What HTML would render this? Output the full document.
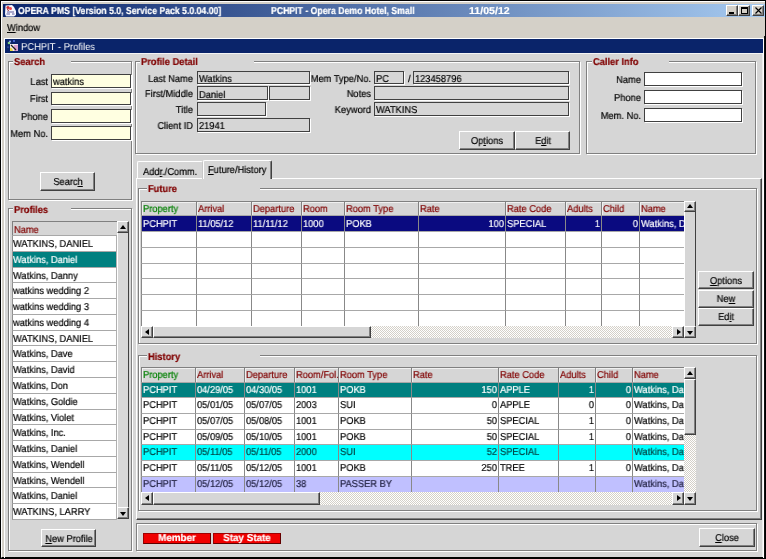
<!DOCTYPE html><html><head><meta charset="utf-8"><style>
html,body{margin:0;padding:0;}
body{width:766px;height:559px;position:relative;overflow:hidden;background:#d4d0c8;font-family:"Liberation Sans",sans-serif;font-size:10px;color:#000;text-rendering:geometricPrecision;}
div{position:absolute;box-sizing:border-box;}
.t{white-space:nowrap;will-change:transform;-webkit-text-stroke:0.2px currentColor;}
.btn{background:#d6d6d6;border-top:1px solid #fff;border-left:1px solid #fff;border-right:1px solid #404040;border-bottom:1px solid #404040;box-shadow:inset -1px -1px 0 #808080;}
u{text-decoration:underline;}
</style></head><body>
<div style="left:0px;top:0px;width:766px;height:559px;border:1px solid #000"></div>
<div style="left:1px;top:1px;width:764px;height:557px;border-top:1px solid #fff;border-left:1px solid #fff;border-bottom:1px solid #000"></div>
<div style="left:3px;top:4px;width:762px;height:13px;background:linear-gradient(to right,#0a246a,#a6caf0)"></div>
<div class="t" style="left:18px;top:7px;font-weight:bold;font-size:10px;line-height:10px;color:#fff;transform:scaleX(0.87);transform-origin:0 0;">OPERA PMS [Version 5.0, Service Pack 5.0.04.00]</div>
<div class="t" style="left:271px;top:7px;font-weight:bold;font-size:10px;line-height:10px;color:#fff;transform:scaleX(0.87);transform-origin:0 0;">PCHPIT - Opera Demo Hotel, Small</div>
<div class="t" style="left:469px;top:7px;font-weight:bold;font-size:10px;line-height:10px;color:#fff;transform:scaleX(1.06);transform-origin:0 0;">11/05/12</div>
<svg style="position:absolute;left:4px;top:4px" width="13" height="13" viewBox="0 0 13 13"><path d="M1.5 1.5 L8 1 L10 3 L12 7 L12 11 L10 12.5 L2 12.5 L1 10 Z" fill="#f6f6ff"/><circle cx="4" cy="3.5" r="1.6" fill="#d03030"/><circle cx="6.5" cy="4.5" r="1.5" fill="#f04848"/><path d="M3 5.5 L5 6.5" stroke="#902020" stroke-width="1"/><path d="M3 8 L10 8 M2.5 10 L6 10 M8 10 L10.5 10" stroke="#5a5a9a" stroke-width="1"/></svg>
<div class="btn" style="left:726px;top:5px;width:12px;height:11px;background:#d4d0c8"></div>
<div class="btn" style="left:738px;top:5px;width:12px;height:11px;background:#d4d0c8"></div>
<div class="btn" style="left:752px;top:5px;width:12px;height:11px;background:#d4d0c8"></div>
<div style="left:729px;top:12px;width:5px;height:2px;background:#000"></div>
<div style="left:741px;top:7px;width:7px;height:7px;border:1px solid #000;border-top-width:2px"></div>
<svg style="position:absolute;left:755px;top:7px" width="7" height="7" viewBox="0 0 7 7"><path d="M0.5 0.5L6.5 6.5M6.5 0.5L0.5 6.5" stroke="#000" stroke-width="1.15"/></svg>
<div class="t" style="left:7px;top:24px;font-weight:normal;font-size:10px;line-height:10px;color:#000;transform:scaleX(0.93);transform-origin:0 0;"><u>W</u>indow</div>
<div style="left:4px;top:38px;width:760px;height:520px;border-top:1px solid #fff;border-left:1px solid #fff;border-right:1px solid #fff"></div>
<div style="left:764px;top:36px;width:1px;height:522px;background:#101010"></div>
<div style="left:5px;top:53px;width:758px;height:504px;background:#d6d6d6"></div>
<div style="left:762px;top:53px;width:1px;height:504px;background:#ececec"></div>
<div style="left:5px;top:53px;width:758px;height:1px;background:#f4f4f4"></div>
<div style="left:5px;top:39px;width:758px;height:14px;background:#0a246a"></div>
<svg style="position:absolute;left:5px;top:39px" width="14" height="14" viewBox="0 0 14 14"><rect x="5" y="5" width="8" height="7" fill="#f0e8f0"/><path d="M5 9 Q7 8 8 12 L5 12Z" fill="#e8d840"/><path d="M9 6 L13 6 L13 12 L9 12Z" fill="#d8a0d0"/><path d="M6 6 L11 11" stroke="#202020" stroke-width="1.2"/><circle cx="4" cy="4" r="1.3" fill="#80d080"/><circle cx="5" cy="2.5" r="1" fill="#a0b8ff"/><circle cx="9" cy="2" r="0.9" fill="#6080ff"/><circle cx="3" cy="8" r="0.6" fill="#8090ff"/></svg>
<div class="t" style="left:20.5px;top:43px;font-weight:normal;font-size:10px;line-height:10px;color:#fff;transform:scaleX(0.94);transform-origin:0 0;-webkit-text-stroke:0;">PCHPIT - Profiles</div>
<div style="left:9px;top:62px;width:124px;height:139px;border:1px solid #fff"></div>
<div style="left:8px;top:61px;width:124px;height:139px;border:1px solid #808080"></div>
<div style="left:13px;top:60px;width:58px;height:4px;background:#d6d6d6"></div>
<div class="t" style="left:14px;top:58px;font-weight:bold;font-size:10px;line-height:10px;color:#800000;transform:scaleX(0.93);transform-origin:0 0;">Search</div>
<div class="t" style="left:-352px;width:400px;text-align:right;top:78px;font-weight:normal;font-size:10px;line-height:10px;color:#000;transform:scaleX(0.93);transform-origin:100% 0;">Last</div>
<div style="left:51px;top:74px;width:80px;height:14px;background:#ffffe1;border:1px solid #404040;box-shadow:1px 1px 0 #fff"></div>
<div class="t" style="left:53px;top:78px;font-weight:normal;font-size:10px;line-height:10px;color:#000;transform:scaleX(0.93);transform-origin:0 0;">watkins</div>
<div class="t" style="left:-352px;width:400px;text-align:right;top:95px;font-weight:normal;font-size:10px;line-height:10px;color:#000;transform:scaleX(0.93);transform-origin:100% 0;">First</div>
<div style="left:51px;top:92px;width:80px;height:13px;background:#ffffe1;border:1px solid #404040;box-shadow:1px 1px 0 #fff"></div>
<div class="t" style="left:-352px;width:400px;text-align:right;top:113px;font-weight:normal;font-size:10px;line-height:10px;color:#000;transform:scaleX(0.93);transform-origin:100% 0;">Phone</div>
<div style="left:51px;top:109px;width:80px;height:14px;background:#ffffe1;border:1px solid #404040;box-shadow:1px 1px 0 #fff"></div>
<div class="t" style="left:-352px;width:400px;text-align:right;top:130px;font-weight:normal;font-size:10px;line-height:10px;color:#000;transform:scaleX(0.93);transform-origin:100% 0;">Mem No.</div>
<div style="left:51px;top:126px;width:80px;height:14px;background:#ffffe1;border:1px solid #404040;box-shadow:1px 1px 0 #fff"></div>
<div class="btn" style="left:40px;top:172px;width:55px;height:19px;"></div>
<div class="t" style="left:-132.5px;width:400px;text-align:center;top:178px;font-weight:normal;font-size:10px;line-height:10px;color:#000;transform:scaleX(0.93);transform-origin:50% 0;">Searc<u>h</u></div>
<div style="left:9px;top:209px;width:124px;height:343px;border:1px solid #fff"></div>
<div style="left:8px;top:208px;width:124px;height:343px;border:1px solid #808080"></div>
<div style="left:13px;top:207px;width:58px;height:4px;background:#d6d6d6"></div>
<div class="t" style="left:14px;top:206px;font-weight:bold;font-size:10px;line-height:10px;color:#800000;transform:scaleX(0.93);transform-origin:0 0;">Profiles</div>
<div style="left:12px;top:221px;width:105px;height:15px;background:#d6d6d6;border-top:1px solid #808080;border-left:1px solid #808080;border-bottom:1px solid #808080"></div>
<div class="t" style="left:14px;top:226px;font-weight:normal;font-size:10px;line-height:10px;color:#800000;transform:scaleX(0.93);transform-origin:0 0;">Name</div>
<div style="left:12px;top:235px;width:105px;height:17px;background:#fff;border:1px solid #a8a8a8;border-left-color:#909090;border-right-color:#b0b0b0"></div>
<div class="t" style="left:13px;top:240px;font-weight:normal;font-size:10px;line-height:10px;color:#000;transform:scaleX(0.93);transform-origin:0 0;">WATKINS, DANIEL</div>
<div style="left:12px;top:251px;width:105px;height:17px;background:#008080;border:1px solid #a8a8a8;border-left-color:#909090;border-right-color:#b0b0b0"></div>
<div class="t" style="left:13px;top:256px;font-weight:normal;font-size:10px;line-height:10px;color:#fff;transform:scaleX(0.93);transform-origin:0 0;">Watkins, Daniel</div>
<div style="left:12px;top:267px;width:105px;height:16px;background:#fff;border:1px solid #a8a8a8;border-left-color:#909090;border-right-color:#b0b0b0"></div>
<div class="t" style="left:13px;top:272px;font-weight:normal;font-size:10px;line-height:10px;color:#000;transform:scaleX(0.93);transform-origin:0 0;">Watkins, Danny</div>
<div style="left:12px;top:282px;width:105px;height:17px;background:#fff;border:1px solid #a8a8a8;border-left-color:#909090;border-right-color:#b0b0b0"></div>
<div class="t" style="left:13px;top:287px;font-weight:normal;font-size:10px;line-height:10px;color:#000;transform:scaleX(0.93);transform-origin:0 0;">watkins wedding 2</div>
<div style="left:12px;top:298px;width:105px;height:17px;background:#fff;border:1px solid #a8a8a8;border-left-color:#909090;border-right-color:#b0b0b0"></div>
<div class="t" style="left:13px;top:303px;font-weight:normal;font-size:10px;line-height:10px;color:#000;transform:scaleX(0.93);transform-origin:0 0;">watkins wedding 3</div>
<div style="left:12px;top:314px;width:105px;height:17px;background:#fff;border:1px solid #a8a8a8;border-left-color:#909090;border-right-color:#b0b0b0"></div>
<div class="t" style="left:13px;top:319px;font-weight:normal;font-size:10px;line-height:10px;color:#000;transform:scaleX(0.93);transform-origin:0 0;">watkins wedding 4</div>
<div style="left:12px;top:330px;width:105px;height:16px;background:#fff;border:1px solid #a8a8a8;border-left-color:#909090;border-right-color:#b0b0b0"></div>
<div class="t" style="left:13px;top:335px;font-weight:normal;font-size:10px;line-height:10px;color:#000;transform:scaleX(0.93);transform-origin:0 0;">WATKINS, DANIEL</div>
<div style="left:12px;top:345px;width:105px;height:17px;background:#fff;border:1px solid #a8a8a8;border-left-color:#909090;border-right-color:#b0b0b0"></div>
<div class="t" style="left:13px;top:350px;font-weight:normal;font-size:10px;line-height:10px;color:#000;transform:scaleX(0.93);transform-origin:0 0;">Watkins, Dave</div>
<div style="left:12px;top:361px;width:105px;height:17px;background:#fff;border:1px solid #a8a8a8;border-left-color:#909090;border-right-color:#b0b0b0"></div>
<div class="t" style="left:13px;top:366px;font-weight:normal;font-size:10px;line-height:10px;color:#000;transform:scaleX(0.93);transform-origin:0 0;">Watkins, David</div>
<div style="left:12px;top:377px;width:105px;height:17px;background:#fff;border:1px solid #a8a8a8;border-left-color:#909090;border-right-color:#b0b0b0"></div>
<div class="t" style="left:13px;top:382px;font-weight:normal;font-size:10px;line-height:10px;color:#000;transform:scaleX(0.93);transform-origin:0 0;">Watkins, Don</div>
<div style="left:12px;top:393px;width:105px;height:17px;background:#fff;border:1px solid #a8a8a8;border-left-color:#909090;border-right-color:#b0b0b0"></div>
<div class="t" style="left:13px;top:398px;font-weight:normal;font-size:10px;line-height:10px;color:#000;transform:scaleX(0.93);transform-origin:0 0;">Watkins, Goldie</div>
<div style="left:12px;top:409px;width:105px;height:16px;background:#fff;border:1px solid #a8a8a8;border-left-color:#909090;border-right-color:#b0b0b0"></div>
<div class="t" style="left:13px;top:414px;font-weight:normal;font-size:10px;line-height:10px;color:#000;transform:scaleX(0.93);transform-origin:0 0;">Watkins, Violet</div>
<div style="left:12px;top:424px;width:105px;height:17px;background:#fff;border:1px solid #a8a8a8;border-left-color:#909090;border-right-color:#b0b0b0"></div>
<div class="t" style="left:13px;top:429px;font-weight:normal;font-size:10px;line-height:10px;color:#000;transform:scaleX(0.93);transform-origin:0 0;">Watkins, Inc.</div>
<div style="left:12px;top:440px;width:105px;height:17px;background:#fff;border:1px solid #a8a8a8;border-left-color:#909090;border-right-color:#b0b0b0"></div>
<div class="t" style="left:13px;top:445px;font-weight:normal;font-size:10px;line-height:10px;color:#000;transform:scaleX(0.93);transform-origin:0 0;">Watkins, Daniel</div>
<div style="left:12px;top:456px;width:105px;height:17px;background:#fff;border:1px solid #a8a8a8;border-left-color:#909090;border-right-color:#b0b0b0"></div>
<div class="t" style="left:13px;top:461px;font-weight:normal;font-size:10px;line-height:10px;color:#000;transform:scaleX(0.93);transform-origin:0 0;">Watkins, Wendell</div>
<div style="left:12px;top:472px;width:105px;height:16px;background:#fff;border:1px solid #a8a8a8;border-left-color:#909090;border-right-color:#b0b0b0"></div>
<div class="t" style="left:13px;top:477px;font-weight:normal;font-size:10px;line-height:10px;color:#000;transform:scaleX(0.93);transform-origin:0 0;">Watkins, Wendell</div>
<div style="left:12px;top:487px;width:105px;height:17px;background:#fff;border:1px solid #a8a8a8;border-left-color:#909090;border-right-color:#b0b0b0"></div>
<div class="t" style="left:13px;top:492px;font-weight:normal;font-size:10px;line-height:10px;color:#000;transform:scaleX(0.93);transform-origin:0 0;">Watkins, Daniel</div>
<div style="left:12px;top:503px;width:105px;height:17px;background:#fff;border:1px solid #a8a8a8;border-left-color:#909090;border-right-color:#b0b0b0"></div>
<div class="t" style="left:13px;top:508px;font-weight:normal;font-size:10px;line-height:10px;color:#000;transform:scaleX(0.93);transform-origin:0 0;">WATKINS, LARRY</div>
<div style="left:117px;top:221px;width:12px;height:298px;background:#d8d8d8;border-left:1px solid #fff;border-right:1px solid #404040"></div>
<div class="btn" style="left:117px;top:221px;width:12px;height:12px"></div>
<div style="left:119.5px;top:225px;width:0px;height:0px;border-left:3px solid transparent;border-right:3px solid transparent;border-bottom:4px solid #000"></div>
<div class="btn" style="left:117px;top:507px;width:12px;height:12px"></div>
<div style="left:119.5px;top:512px;width:0px;height:0px;border-left:3px solid transparent;border-right:3px solid transparent;border-top:4px solid #000"></div>
<div class="btn" style="left:41px;top:529px;width:55px;height:18px;"></div>
<div class="t" style="left:-131.5px;width:400px;text-align:center;top:535px;font-weight:normal;font-size:10px;line-height:10px;color:#000;transform:scaleX(0.93);transform-origin:50% 0;"><u>N</u>ew Profile</div>
<div style="left:136px;top:62px;width:445px;height:93px;border:1px solid #fff"></div>
<div style="left:135px;top:61px;width:445px;height:93px;border:1px solid #808080"></div>
<div style="left:140px;top:60px;width:114px;height:4px;background:#d6d6d6"></div>
<div class="t" style="left:141px;top:58px;font-weight:bold;font-size:10px;line-height:10px;color:#800000;transform:scaleX(0.93);transform-origin:0 0;">Profile Detail</div>
<div class="t" style="left:-207px;width:400px;text-align:right;top:75px;font-weight:normal;font-size:10px;line-height:10px;color:#000;transform:scaleX(0.93);transform-origin:100% 0;">Last Name</div>
<div class="t" style="left:-207px;width:400px;text-align:right;top:90px;font-weight:normal;font-size:10px;line-height:10px;color:#000;transform:scaleX(0.93);transform-origin:100% 0;">First/Middle</div>
<div class="t" style="left:-207px;width:400px;text-align:right;top:106px;font-weight:normal;font-size:10px;line-height:10px;color:#000;transform:scaleX(0.93);transform-origin:100% 0;">Title</div>
<div class="t" style="left:-207px;width:400px;text-align:right;top:122px;font-weight:normal;font-size:10px;line-height:10px;color:#000;transform:scaleX(0.93);transform-origin:100% 0;">Client ID</div>
<div style="left:197px;top:71px;width:113px;height:13px;background:#d6d6d6;border:1px solid #404040;box-shadow:1px 1px 0 #fff"></div>
<div class="t" style="left:199px;top:75px;font-weight:normal;font-size:10px;line-height:10px;color:#000;transform:scaleX(0.93);transform-origin:0 0;">Watkins</div>
<div style="left:197px;top:86px;width:71px;height:14px;background:#d6d6d6;border:1px solid #404040;box-shadow:1px 1px 0 #fff"></div>
<div class="t" style="left:199px;top:91px;font-weight:normal;font-size:10px;line-height:10px;color:#000;transform:scaleX(0.93);transform-origin:0 0;">Daniel</div>
<div style="left:269px;top:86px;width:41px;height:14px;background:#d6d6d6;border:1px solid #404040;box-shadow:1px 1px 0 #fff"></div>
<div style="left:197px;top:102px;width:69px;height:14px;background:#d6d6d6;border:1px solid #404040;box-shadow:1px 1px 0 #fff"></div>
<div style="left:197px;top:118px;width:113px;height:14px;background:#d6d6d6;border:1px solid #404040;box-shadow:1px 1px 0 #fff"></div>
<div class="t" style="left:199px;top:122px;font-weight:normal;font-size:10px;line-height:10px;color:#000;transform:scaleX(0.93);transform-origin:0 0;">21941</div>
<div class="t" style="left:-29px;width:400px;text-align:right;top:75px;font-weight:normal;font-size:10px;line-height:10px;color:#000;transform:scaleX(0.93);transform-origin:100% 0;">Mem Type/No.</div>
<div class="t" style="left:-29px;width:400px;text-align:right;top:90px;font-weight:normal;font-size:10px;line-height:10px;color:#000;transform:scaleX(0.93);transform-origin:100% 0;">Notes</div>
<div class="t" style="left:-29px;width:400px;text-align:right;top:106px;font-weight:normal;font-size:10px;line-height:10px;color:#000;transform:scaleX(0.93);transform-origin:100% 0;">Keyword</div>
<div style="left:374px;top:71px;width:30px;height:13px;background:#d6d6d6;border:1px solid #404040;box-shadow:1px 1px 0 #fff"></div>
<div class="t" style="left:376px;top:75px;font-weight:normal;font-size:10px;line-height:10px;color:#000;transform:scaleX(0.93);transform-origin:0 0;">PC</div>
<div class="t" style="left:408px;top:75px;font-weight:normal;font-size:10px;line-height:10px;color:#000;transform:scaleX(0.93);transform-origin:0 0;">/</div>
<div style="left:413px;top:71px;width:156px;height:13px;background:#d6d6d6;border:1px solid #404040;box-shadow:1px 1px 0 #fff"></div>
<div class="t" style="left:415px;top:75px;font-weight:normal;font-size:10px;line-height:10px;color:#000;transform:scaleX(0.93);transform-origin:0 0;">123458796</div>
<div style="left:374px;top:86px;width:195px;height:14px;background:#d6d6d6;border:1px solid #404040;box-shadow:1px 1px 0 #fff"></div>
<div style="left:374px;top:102px;width:195px;height:14px;background:#d6d6d6;border:1px solid #404040;box-shadow:1px 1px 0 #fff"></div>
<div class="t" style="left:376px;top:106px;font-weight:normal;font-size:10px;line-height:10px;color:#000;transform:scaleX(0.93);transform-origin:0 0;">WATKINS</div>
<div class="btn" style="left:459px;top:131px;width:56px;height:19px;"></div>
<div class="t" style="left:287.0px;width:400px;text-align:center;top:137px;font-weight:normal;font-size:10px;line-height:10px;color:#000;transform:scaleX(0.93);transform-origin:50% 0;">Op<u>t</u>ions</div>
<div class="btn" style="left:515px;top:131px;width:55px;height:19px;"></div>
<div class="t" style="left:342.5px;width:400px;text-align:center;top:137px;font-weight:normal;font-size:10px;line-height:10px;color:#000;transform:scaleX(0.93);transform-origin:50% 0;">E<u>d</u>it</div>
<div style="left:587px;top:62px;width:170px;height:93px;border:1px solid #fff"></div>
<div style="left:586px;top:61px;width:170px;height:93px;border:1px solid #808080"></div>
<div style="left:592px;top:60px;width:77px;height:4px;background:#d6d6d6"></div>
<div class="t" style="left:593px;top:58px;font-weight:bold;font-size:10px;line-height:10px;color:#800000;transform:scaleX(0.93);transform-origin:0 0;">Caller Info</div>
<div class="t" style="left:241px;width:400px;text-align:right;top:76px;font-weight:normal;font-size:10px;line-height:10px;color:#000;transform:scaleX(0.93);transform-origin:100% 0;">Name</div>
<div style="left:644px;top:72px;width:98px;height:14px;background:#fff;border:1px solid #404040;box-shadow:1px 1px 0 #fff"></div>
<div class="t" style="left:241px;width:400px;text-align:right;top:94px;font-weight:normal;font-size:10px;line-height:10px;color:#000;transform:scaleX(0.93);transform-origin:100% 0;">Phone</div>
<div style="left:644px;top:90px;width:98px;height:14px;background:#fff;border:1px solid #404040;box-shadow:1px 1px 0 #fff"></div>
<div class="t" style="left:241px;width:400px;text-align:right;top:112px;font-weight:normal;font-size:10px;line-height:10px;color:#000;transform:scaleX(0.93);transform-origin:100% 0;">Mem. No.</div>
<div style="left:644px;top:108px;width:98px;height:14px;background:#fff;border:1px solid #404040;box-shadow:1px 1px 0 #fff"></div>
<div style="left:136px;top:178px;width:626px;height:342px;border-top:1px solid #fff;border-left:1px solid #fff;border-right:1px solid #404040;border-bottom:1px solid #404040;box-shadow:inset -1px -1px 0 #808080"></div>
<div style="left:137px;top:161px;width:66px;height:18px;border-top:1px solid #fff;border-left:1px solid #fff;border-right:1px solid #c8c8c8;border-radius:2px 2px 0 0"></div>
<div class="t" style="left:143px;top:168px;font-weight:normal;font-size:10px;line-height:10px;color:#000;transform:scaleX(0.93);transform-origin:0 0;">Add<u>r</u>./Comm.</div>
<div style="left:203px;top:160px;width:69px;height:19px;background:#d6d6d6;border-top:1px solid #fff;border-left:1px solid #fff;border-right:1px solid #404040;box-shadow:inset -1px 0 0 #808080;border-radius:2px 2px 0 0"></div>
<div class="t" style="left:208px;top:166px;font-weight:normal;font-size:10px;line-height:10px;color:#000;transform:scaleX(0.93);transform-origin:0 0;"><u>F</u>uture/History</div>
<div style="left:139px;top:189px;width:619px;height:156px;border:1px solid #fff"></div>
<div style="left:138px;top:188px;width:619px;height:156px;border:1px solid #808080"></div>
<div style="left:147px;top:187px;width:113px;height:4px;background:#d6d6d6"></div>
<div class="t" style="left:148px;top:185px;font-weight:bold;font-size:10px;line-height:10px;color:#800000;transform:scaleX(0.93);transform-origin:0 0;">Future</div>
<div style="left:141px;top:201px;width:56px;height:15px;background:#d6d6d6;border:1px solid #808080;box-shadow:inset 1px 1px 0 #f0f0f0"></div>
<div class="t" style="left:143px;top:205px;font-weight:normal;font-size:10px;line-height:10px;color:#008000;transform:scaleX(0.93);transform-origin:0 0;">Property</div>
<div style="left:196px;top:201px;width:56px;height:15px;background:#d6d6d6;border:1px solid #808080;box-shadow:inset 1px 1px 0 #f0f0f0"></div>
<div class="t" style="left:198px;top:205px;font-weight:normal;font-size:10px;line-height:10px;color:#800000;transform:scaleX(0.93);transform-origin:0 0;">Arrival</div>
<div style="left:251px;top:201px;width:51px;height:15px;background:#d6d6d6;border:1px solid #808080;box-shadow:inset 1px 1px 0 #f0f0f0"></div>
<div class="t" style="left:253px;top:205px;font-weight:normal;font-size:10px;line-height:10px;color:#800000;transform:scaleX(0.93);transform-origin:0 0;">Departure</div>
<div style="left:301px;top:201px;width:44px;height:15px;background:#d6d6d6;border:1px solid #808080;box-shadow:inset 1px 1px 0 #f0f0f0"></div>
<div class="t" style="left:303px;top:205px;font-weight:normal;font-size:10px;line-height:10px;color:#800000;transform:scaleX(0.93);transform-origin:0 0;">Room</div>
<div style="left:344px;top:201px;width:75px;height:15px;background:#d6d6d6;border:1px solid #808080;box-shadow:inset 1px 1px 0 #f0f0f0"></div>
<div class="t" style="left:346px;top:205px;font-weight:normal;font-size:10px;line-height:10px;color:#800000;transform:scaleX(0.93);transform-origin:0 0;">Room Type</div>
<div style="left:418px;top:201px;width:88px;height:15px;background:#d6d6d6;border:1px solid #808080;box-shadow:inset 1px 1px 0 #f0f0f0"></div>
<div class="t" style="left:420px;top:205px;font-weight:normal;font-size:10px;line-height:10px;color:#800000;transform:scaleX(0.93);transform-origin:0 0;">Rate</div>
<div style="left:505px;top:201px;width:61px;height:15px;background:#d6d6d6;border:1px solid #808080;box-shadow:inset 1px 1px 0 #f0f0f0"></div>
<div class="t" style="left:507px;top:205px;font-weight:normal;font-size:10px;line-height:10px;color:#800000;transform:scaleX(0.93);transform-origin:0 0;">Rate Code</div>
<div style="left:565px;top:201px;width:37px;height:15px;background:#d6d6d6;border:1px solid #808080;box-shadow:inset 1px 1px 0 #f0f0f0"></div>
<div class="t" style="left:567px;top:205px;font-weight:normal;font-size:10px;line-height:10px;color:#800000;transform:scaleX(0.93);transform-origin:0 0;">Adults</div>
<div style="left:601px;top:201px;width:39px;height:15px;background:#d6d6d6;border:1px solid #808080;box-shadow:inset 1px 1px 0 #f0f0f0"></div>
<div class="t" style="left:603px;top:205px;font-weight:normal;font-size:10px;line-height:10px;color:#800000;transform:scaleX(0.93);transform-origin:0 0;">Child</div>
<div style="left:639px;top:201px;width:46px;height:15px;background:#d6d6d6;border:1px solid #808080;box-shadow:inset 1px 1px 0 #f0f0f0"></div>
<div class="t" style="left:641px;top:205px;font-weight:normal;font-size:10px;line-height:10px;color:#800000;transform:scaleX(0.93);transform-origin:0 0;">Name</div>
<div style="left:141px;top:215px;width:543px;height:17px;background:#0a0a80"></div>
<div style="left:141px;top:215px;width:56px;height:17px;border:1px solid #a8a8a8;border-left-color:#888;border-right-color:#888"></div>
<div style="left:196px;top:215px;width:56px;height:17px;border:1px solid #a8a8a8;border-left-color:#888;border-right-color:#888"></div>
<div style="left:251px;top:215px;width:51px;height:17px;border:1px solid #a8a8a8;border-left-color:#888;border-right-color:#888"></div>
<div style="left:301px;top:215px;width:44px;height:17px;border:1px solid #a8a8a8;border-left-color:#888;border-right-color:#888"></div>
<div style="left:344px;top:215px;width:75px;height:17px;border:1px solid #a8a8a8;border-left-color:#888;border-right-color:#888"></div>
<div style="left:418px;top:215px;width:88px;height:17px;border:1px solid #a8a8a8;border-left-color:#888;border-right-color:#888"></div>
<div style="left:505px;top:215px;width:61px;height:17px;border:1px solid #a8a8a8;border-left-color:#888;border-right-color:#888"></div>
<div style="left:565px;top:215px;width:37px;height:17px;border:1px solid #a8a8a8;border-left-color:#888;border-right-color:#888"></div>
<div style="left:601px;top:215px;width:39px;height:17px;border:1px solid #a8a8a8;border-left-color:#888;border-right-color:#888"></div>
<div style="left:639px;top:215px;width:46px;height:17px;border:1px solid #a8a8a8;border-left-color:#888;border-right-color:#888"></div>
<div style="left:142px;top:215px;width:55px;height:16px;overflow:hidden">
<div class="t" style="left:0.5px;top:5px;font-weight:normal;font-size:10px;line-height:10px;color:#fff;transform:scaleX(0.93);transform-origin:0 0;">PCHPIT</div>
</div>
<div style="left:197px;top:215px;width:55px;height:16px;overflow:hidden">
<div class="t" style="left:0.5px;top:5px;font-weight:normal;font-size:10px;line-height:10px;color:#fff;transform:scaleX(0.93);transform-origin:0 0;">11/05/12</div>
</div>
<div style="left:252px;top:215px;width:50px;height:16px;overflow:hidden">
<div class="t" style="left:0.5px;top:5px;font-weight:normal;font-size:10px;line-height:10px;color:#fff;transform:scaleX(0.93);transform-origin:0 0;">11/11/12</div>
</div>
<div style="left:302px;top:215px;width:43px;height:16px;overflow:hidden">
<div class="t" style="left:0.5px;top:5px;font-weight:normal;font-size:10px;line-height:10px;color:#fff;transform:scaleX(0.93);transform-origin:0 0;">1000</div>
</div>
<div style="left:345px;top:215px;width:74px;height:16px;overflow:hidden">
<div class="t" style="left:0.5px;top:5px;font-weight:normal;font-size:10px;line-height:10px;color:#fff;transform:scaleX(0.93);transform-origin:0 0;">POKB</div>
</div>
<div class="t" style="left:103.5px;width:400px;text-align:right;top:220px;font-weight:normal;font-size:10px;line-height:10px;color:#fff;transform:scaleX(0.93);transform-origin:100% 0;">100</div>
<div style="left:506px;top:215px;width:60px;height:16px;overflow:hidden">
<div class="t" style="left:0.5px;top:5px;font-weight:normal;font-size:10px;line-height:10px;color:#fff;transform:scaleX(0.93);transform-origin:0 0;">SPECIAL</div>
</div>
<div class="t" style="left:199.5px;width:400px;text-align:right;top:220px;font-weight:normal;font-size:10px;line-height:10px;color:#fff;transform:scaleX(0.93);transform-origin:100% 0;">1</div>
<div class="t" style="left:237.5px;width:400px;text-align:right;top:220px;font-weight:normal;font-size:10px;line-height:10px;color:#fff;transform:scaleX(0.93);transform-origin:100% 0;">0</div>
<div style="left:640px;top:215px;width:45px;height:16px;overflow:hidden">
<div class="t" style="left:0.5px;top:5px;font-weight:normal;font-size:10px;line-height:10px;color:#fff;transform:scaleX(0.93);transform-origin:0 0;">Watkins, D</div>
</div>
<div style="left:141px;top:231px;width:543px;height:17px;background:#fff"></div>
<div style="left:141px;top:231px;width:56px;height:17px;border:1px solid #a8a8a8;border-left-color:#888;border-right-color:#888"></div>
<div style="left:196px;top:231px;width:56px;height:17px;border:1px solid #a8a8a8;border-left-color:#888;border-right-color:#888"></div>
<div style="left:251px;top:231px;width:51px;height:17px;border:1px solid #a8a8a8;border-left-color:#888;border-right-color:#888"></div>
<div style="left:301px;top:231px;width:44px;height:17px;border:1px solid #a8a8a8;border-left-color:#888;border-right-color:#888"></div>
<div style="left:344px;top:231px;width:75px;height:17px;border:1px solid #a8a8a8;border-left-color:#888;border-right-color:#888"></div>
<div style="left:418px;top:231px;width:88px;height:17px;border:1px solid #a8a8a8;border-left-color:#888;border-right-color:#888"></div>
<div style="left:505px;top:231px;width:61px;height:17px;border:1px solid #a8a8a8;border-left-color:#888;border-right-color:#888"></div>
<div style="left:565px;top:231px;width:37px;height:17px;border:1px solid #a8a8a8;border-left-color:#888;border-right-color:#888"></div>
<div style="left:601px;top:231px;width:39px;height:17px;border:1px solid #a8a8a8;border-left-color:#888;border-right-color:#888"></div>
<div style="left:639px;top:231px;width:46px;height:17px;border:1px solid #a8a8a8;border-left-color:#888;border-right-color:#888"></div>
<div style="left:141px;top:247px;width:543px;height:17px;background:#fff"></div>
<div style="left:141px;top:247px;width:56px;height:17px;border:1px solid #a8a8a8;border-left-color:#888;border-right-color:#888"></div>
<div style="left:196px;top:247px;width:56px;height:17px;border:1px solid #a8a8a8;border-left-color:#888;border-right-color:#888"></div>
<div style="left:251px;top:247px;width:51px;height:17px;border:1px solid #a8a8a8;border-left-color:#888;border-right-color:#888"></div>
<div style="left:301px;top:247px;width:44px;height:17px;border:1px solid #a8a8a8;border-left-color:#888;border-right-color:#888"></div>
<div style="left:344px;top:247px;width:75px;height:17px;border:1px solid #a8a8a8;border-left-color:#888;border-right-color:#888"></div>
<div style="left:418px;top:247px;width:88px;height:17px;border:1px solid #a8a8a8;border-left-color:#888;border-right-color:#888"></div>
<div style="left:505px;top:247px;width:61px;height:17px;border:1px solid #a8a8a8;border-left-color:#888;border-right-color:#888"></div>
<div style="left:565px;top:247px;width:37px;height:17px;border:1px solid #a8a8a8;border-left-color:#888;border-right-color:#888"></div>
<div style="left:601px;top:247px;width:39px;height:17px;border:1px solid #a8a8a8;border-left-color:#888;border-right-color:#888"></div>
<div style="left:639px;top:247px;width:46px;height:17px;border:1px solid #a8a8a8;border-left-color:#888;border-right-color:#888"></div>
<div style="left:141px;top:263px;width:543px;height:16px;background:#fff"></div>
<div style="left:141px;top:263px;width:56px;height:16px;border:1px solid #a8a8a8;border-left-color:#888;border-right-color:#888"></div>
<div style="left:196px;top:263px;width:56px;height:16px;border:1px solid #a8a8a8;border-left-color:#888;border-right-color:#888"></div>
<div style="left:251px;top:263px;width:51px;height:16px;border:1px solid #a8a8a8;border-left-color:#888;border-right-color:#888"></div>
<div style="left:301px;top:263px;width:44px;height:16px;border:1px solid #a8a8a8;border-left-color:#888;border-right-color:#888"></div>
<div style="left:344px;top:263px;width:75px;height:16px;border:1px solid #a8a8a8;border-left-color:#888;border-right-color:#888"></div>
<div style="left:418px;top:263px;width:88px;height:16px;border:1px solid #a8a8a8;border-left-color:#888;border-right-color:#888"></div>
<div style="left:505px;top:263px;width:61px;height:16px;border:1px solid #a8a8a8;border-left-color:#888;border-right-color:#888"></div>
<div style="left:565px;top:263px;width:37px;height:16px;border:1px solid #a8a8a8;border-left-color:#888;border-right-color:#888"></div>
<div style="left:601px;top:263px;width:39px;height:16px;border:1px solid #a8a8a8;border-left-color:#888;border-right-color:#888"></div>
<div style="left:639px;top:263px;width:46px;height:16px;border:1px solid #a8a8a8;border-left-color:#888;border-right-color:#888"></div>
<div style="left:141px;top:278px;width:543px;height:17px;background:#fff"></div>
<div style="left:141px;top:278px;width:56px;height:17px;border:1px solid #a8a8a8;border-left-color:#888;border-right-color:#888"></div>
<div style="left:196px;top:278px;width:56px;height:17px;border:1px solid #a8a8a8;border-left-color:#888;border-right-color:#888"></div>
<div style="left:251px;top:278px;width:51px;height:17px;border:1px solid #a8a8a8;border-left-color:#888;border-right-color:#888"></div>
<div style="left:301px;top:278px;width:44px;height:17px;border:1px solid #a8a8a8;border-left-color:#888;border-right-color:#888"></div>
<div style="left:344px;top:278px;width:75px;height:17px;border:1px solid #a8a8a8;border-left-color:#888;border-right-color:#888"></div>
<div style="left:418px;top:278px;width:88px;height:17px;border:1px solid #a8a8a8;border-left-color:#888;border-right-color:#888"></div>
<div style="left:505px;top:278px;width:61px;height:17px;border:1px solid #a8a8a8;border-left-color:#888;border-right-color:#888"></div>
<div style="left:565px;top:278px;width:37px;height:17px;border:1px solid #a8a8a8;border-left-color:#888;border-right-color:#888"></div>
<div style="left:601px;top:278px;width:39px;height:17px;border:1px solid #a8a8a8;border-left-color:#888;border-right-color:#888"></div>
<div style="left:639px;top:278px;width:46px;height:17px;border:1px solid #a8a8a8;border-left-color:#888;border-right-color:#888"></div>
<div style="left:141px;top:294px;width:543px;height:17px;background:#fff"></div>
<div style="left:141px;top:294px;width:56px;height:17px;border:1px solid #a8a8a8;border-left-color:#888;border-right-color:#888"></div>
<div style="left:196px;top:294px;width:56px;height:17px;border:1px solid #a8a8a8;border-left-color:#888;border-right-color:#888"></div>
<div style="left:251px;top:294px;width:51px;height:17px;border:1px solid #a8a8a8;border-left-color:#888;border-right-color:#888"></div>
<div style="left:301px;top:294px;width:44px;height:17px;border:1px solid #a8a8a8;border-left-color:#888;border-right-color:#888"></div>
<div style="left:344px;top:294px;width:75px;height:17px;border:1px solid #a8a8a8;border-left-color:#888;border-right-color:#888"></div>
<div style="left:418px;top:294px;width:88px;height:17px;border:1px solid #a8a8a8;border-left-color:#888;border-right-color:#888"></div>
<div style="left:505px;top:294px;width:61px;height:17px;border:1px solid #a8a8a8;border-left-color:#888;border-right-color:#888"></div>
<div style="left:565px;top:294px;width:37px;height:17px;border:1px solid #a8a8a8;border-left-color:#888;border-right-color:#888"></div>
<div style="left:601px;top:294px;width:39px;height:17px;border:1px solid #a8a8a8;border-left-color:#888;border-right-color:#888"></div>
<div style="left:639px;top:294px;width:46px;height:17px;border:1px solid #a8a8a8;border-left-color:#888;border-right-color:#888"></div>
<div style="left:141px;top:310px;width:543px;height:17px;background:#fff"></div>
<div style="left:141px;top:310px;width:56px;height:17px;border:1px solid #a8a8a8;border-left-color:#888;border-right-color:#888"></div>
<div style="left:196px;top:310px;width:56px;height:17px;border:1px solid #a8a8a8;border-left-color:#888;border-right-color:#888"></div>
<div style="left:251px;top:310px;width:51px;height:17px;border:1px solid #a8a8a8;border-left-color:#888;border-right-color:#888"></div>
<div style="left:301px;top:310px;width:44px;height:17px;border:1px solid #a8a8a8;border-left-color:#888;border-right-color:#888"></div>
<div style="left:344px;top:310px;width:75px;height:17px;border:1px solid #a8a8a8;border-left-color:#888;border-right-color:#888"></div>
<div style="left:418px;top:310px;width:88px;height:17px;border:1px solid #a8a8a8;border-left-color:#888;border-right-color:#888"></div>
<div style="left:505px;top:310px;width:61px;height:17px;border:1px solid #a8a8a8;border-left-color:#888;border-right-color:#888"></div>
<div style="left:565px;top:310px;width:37px;height:17px;border:1px solid #a8a8a8;border-left-color:#888;border-right-color:#888"></div>
<div style="left:601px;top:310px;width:39px;height:17px;border:1px solid #a8a8a8;border-left-color:#888;border-right-color:#888"></div>
<div style="left:639px;top:310px;width:46px;height:17px;border:1px solid #a8a8a8;border-left-color:#888;border-right-color:#888"></div>
<div style="left:141px;top:326px;width:543px;height:12px;background-color:#fff;background-image:linear-gradient(45deg,#d4d0c8 25%,transparent 25%,transparent 75%,#d4d0c8 75%),linear-gradient(45deg,#d4d0c8 25%,transparent 25%,transparent 75%,#d4d0c8 75%);background-size:2px 2px;background-position:0 0,1px 1px"></div>
<div class="btn" style="left:141px;top:326px;width:12px;height:12px"></div>
<div style="left:145px;top:329px;width:0px;height:0px;border-top:3px solid transparent;border-bottom:3px solid transparent;border-right:4px solid #000"></div>
<div class="btn" style="left:153px;top:326px;width:218px;height:12px"></div>
<div class="btn" style="left:672px;top:326px;width:12px;height:12px"></div>
<div style="left:677px;top:329px;width:0px;height:0px;border-top:3px solid transparent;border-bottom:3px solid transparent;border-left:4px solid #000"></div>
<div style="left:684px;top:201px;width:12px;height:125px;background:#d6d6d6;border-right:1px solid #404040;border-left:1px solid #fff"></div>
<div class="btn" style="left:684px;top:201px;width:12px;height:11px"></div>
<div style="left:686.5px;top:204px;width:0px;height:0px;border-left:3px solid transparent;border-right:3px solid transparent;border-bottom:4px solid #000"></div>
<div class="btn" style="left:684px;top:326px;width:12px;height:12px"></div>
<div style="left:686.5px;top:331px;width:0px;height:0px;border-left:3px solid transparent;border-right:3px solid transparent;border-top:4px solid #000"></div>
<div class="btn" style="left:698px;top:271px;width:56px;height:18px;"></div>
<div class="t" style="left:526.0px;width:400px;text-align:center;top:277px;font-weight:normal;font-size:10px;line-height:10px;color:#000;transform:scaleX(0.93);transform-origin:50% 0;"><u>O</u>ptions</div>
<div class="btn" style="left:698px;top:290px;width:56px;height:18px;"></div>
<div class="t" style="left:526.0px;width:400px;text-align:center;top:295px;font-weight:normal;font-size:10px;line-height:10px;color:#000;transform:scaleX(0.93);transform-origin:50% 0;">Ne<u>w</u></div>
<div class="btn" style="left:698px;top:308px;width:56px;height:18px;"></div>
<div class="t" style="left:526.0px;width:400px;text-align:center;top:313px;font-weight:normal;font-size:10px;line-height:10px;color:#000;transform:scaleX(0.93);transform-origin:50% 0;">Ed<u>i</u>t</div>
<div style="left:139px;top:356px;width:619px;height:156px;border:1px solid #fff"></div>
<div style="left:138px;top:355px;width:619px;height:156px;border:1px solid #808080"></div>
<div style="left:147px;top:354px;width:113px;height:4px;background:#d6d6d6"></div>
<div class="t" style="left:148px;top:353px;font-weight:bold;font-size:10px;line-height:10px;color:#800000;transform:scaleX(0.93);transform-origin:0 0;">History</div>
<div style="left:141px;top:367px;width:55px;height:16px;background:#d6d6d6;border:1px solid #808080;box-shadow:inset 1px 1px 0 #f0f0f0"></div>
<div class="t" style="left:143px;top:371px;font-weight:normal;font-size:10px;line-height:10px;color:#008000;transform:scaleX(0.93);transform-origin:0 0;">Property</div>
<div style="left:195px;top:367px;width:50px;height:16px;background:#d6d6d6;border:1px solid #808080;box-shadow:inset 1px 1px 0 #f0f0f0"></div>
<div class="t" style="left:197px;top:371px;font-weight:normal;font-size:10px;line-height:10px;color:#800000;transform:scaleX(0.93);transform-origin:0 0;">Arrival</div>
<div style="left:244px;top:367px;width:51px;height:16px;background:#d6d6d6;border:1px solid #808080;box-shadow:inset 1px 1px 0 #f0f0f0"></div>
<div class="t" style="left:246px;top:371px;font-weight:normal;font-size:10px;line-height:10px;color:#800000;transform:scaleX(0.93);transform-origin:0 0;">Departure</div>
<div style="left:294px;top:367px;width:45px;height:16px;background:#d6d6d6;border:1px solid #808080;box-shadow:inset 1px 1px 0 #f0f0f0"></div>
<div class="t" style="left:296px;top:371px;font-weight:normal;font-size:10px;line-height:10px;color:#800000;transform:scaleX(0.93);transform-origin:0 0;">Room/Fol.</div>
<div style="left:338px;top:367px;width:74px;height:16px;background:#d6d6d6;border:1px solid #808080;box-shadow:inset 1px 1px 0 #f0f0f0"></div>
<div class="t" style="left:340px;top:371px;font-weight:normal;font-size:10px;line-height:10px;color:#800000;transform:scaleX(0.93);transform-origin:0 0;">Room Type</div>
<div style="left:411px;top:367px;width:88px;height:16px;background:#d6d6d6;border:1px solid #808080;box-shadow:inset 1px 1px 0 #f0f0f0"></div>
<div class="t" style="left:413px;top:371px;font-weight:normal;font-size:10px;line-height:10px;color:#800000;transform:scaleX(0.93);transform-origin:0 0;">Rate</div>
<div style="left:498px;top:367px;width:61px;height:16px;background:#d6d6d6;border:1px solid #808080;box-shadow:inset 1px 1px 0 #f0f0f0"></div>
<div class="t" style="left:500px;top:371px;font-weight:normal;font-size:10px;line-height:10px;color:#800000;transform:scaleX(0.93);transform-origin:0 0;">Rate Code</div>
<div style="left:558px;top:367px;width:38px;height:16px;background:#d6d6d6;border:1px solid #808080;box-shadow:inset 1px 1px 0 #f0f0f0"></div>
<div class="t" style="left:560px;top:371px;font-weight:normal;font-size:10px;line-height:10px;color:#800000;transform:scaleX(0.93);transform-origin:0 0;">Adults</div>
<div style="left:595px;top:367px;width:38px;height:16px;background:#d6d6d6;border:1px solid #808080;box-shadow:inset 1px 1px 0 #f0f0f0"></div>
<div class="t" style="left:597px;top:371px;font-weight:normal;font-size:10px;line-height:10px;color:#800000;transform:scaleX(0.93);transform-origin:0 0;">Child</div>
<div style="left:632px;top:367px;width:53px;height:16px;background:#d6d6d6;border:1px solid #808080;box-shadow:inset 1px 1px 0 #f0f0f0"></div>
<div class="t" style="left:634px;top:371px;font-weight:normal;font-size:10px;line-height:10px;color:#800000;transform:scaleX(0.93);transform-origin:0 0;">Name</div>
<div style="left:141px;top:382px;width:543px;height:16px;background:#008080"></div>
<div style="left:141px;top:382px;width:55px;height:16px;border:1px solid #a8a8a8;border-left-color:#888;border-right-color:#888"></div>
<div style="left:195px;top:382px;width:50px;height:16px;border:1px solid #a8a8a8;border-left-color:#888;border-right-color:#888"></div>
<div style="left:244px;top:382px;width:51px;height:16px;border:1px solid #a8a8a8;border-left-color:#888;border-right-color:#888"></div>
<div style="left:294px;top:382px;width:45px;height:16px;border:1px solid #a8a8a8;border-left-color:#888;border-right-color:#888"></div>
<div style="left:338px;top:382px;width:74px;height:16px;border:1px solid #a8a8a8;border-left-color:#888;border-right-color:#888"></div>
<div style="left:411px;top:382px;width:88px;height:16px;border:1px solid #a8a8a8;border-left-color:#888;border-right-color:#888"></div>
<div style="left:498px;top:382px;width:61px;height:16px;border:1px solid #a8a8a8;border-left-color:#888;border-right-color:#888"></div>
<div style="left:558px;top:382px;width:38px;height:16px;border:1px solid #a8a8a8;border-left-color:#888;border-right-color:#888"></div>
<div style="left:595px;top:382px;width:38px;height:16px;border:1px solid #a8a8a8;border-left-color:#888;border-right-color:#888"></div>
<div style="left:632px;top:382px;width:53px;height:16px;border:1px solid #a8a8a8;border-left-color:#888;border-right-color:#888"></div>
<div style="left:142px;top:382px;width:54px;height:15px;overflow:hidden">
<div class="t" style="left:0.5px;top:4px;font-weight:normal;font-size:10px;line-height:10px;color:#fff;transform:scaleX(0.93);transform-origin:0 0;">PCHPIT</div>
</div>
<div style="left:196px;top:382px;width:49px;height:15px;overflow:hidden">
<div class="t" style="left:0.5px;top:4px;font-weight:normal;font-size:10px;line-height:10px;color:#fff;transform:scaleX(0.93);transform-origin:0 0;">04/29/05</div>
</div>
<div style="left:245px;top:382px;width:50px;height:15px;overflow:hidden">
<div class="t" style="left:0.5px;top:4px;font-weight:normal;font-size:10px;line-height:10px;color:#fff;transform:scaleX(0.93);transform-origin:0 0;">04/30/05</div>
</div>
<div style="left:295px;top:382px;width:44px;height:15px;overflow:hidden">
<div class="t" style="left:0.5px;top:4px;font-weight:normal;font-size:10px;line-height:10px;color:#fff;transform:scaleX(0.93);transform-origin:0 0;">1001</div>
</div>
<div style="left:339px;top:382px;width:73px;height:15px;overflow:hidden">
<div class="t" style="left:0.5px;top:4px;font-weight:normal;font-size:10px;line-height:10px;color:#fff;transform:scaleX(0.93);transform-origin:0 0;">POKB</div>
</div>
<div class="t" style="left:96.5px;width:400px;text-align:right;top:386px;font-weight:normal;font-size:10px;line-height:10px;color:#fff;transform:scaleX(0.93);transform-origin:100% 0;">150</div>
<div style="left:499px;top:382px;width:60px;height:15px;overflow:hidden">
<div class="t" style="left:0.5px;top:4px;font-weight:normal;font-size:10px;line-height:10px;color:#fff;transform:scaleX(0.93);transform-origin:0 0;">APPLE</div>
</div>
<div class="t" style="left:193.5px;width:400px;text-align:right;top:386px;font-weight:normal;font-size:10px;line-height:10px;color:#fff;transform:scaleX(0.93);transform-origin:100% 0;">1</div>
<div class="t" style="left:230.5px;width:400px;text-align:right;top:386px;font-weight:normal;font-size:10px;line-height:10px;color:#fff;transform:scaleX(0.93);transform-origin:100% 0;">0</div>
<div style="left:633px;top:382px;width:52px;height:15px;overflow:hidden">
<div class="t" style="left:0.5px;top:4px;font-weight:normal;font-size:10px;line-height:10px;color:#fff;transform:scaleX(0.93);transform-origin:0 0;">Watkins, Da</div>
</div>
<div style="left:141px;top:397px;width:543px;height:17px;background:#fff"></div>
<div style="left:141px;top:397px;width:55px;height:17px;border:1px solid #a8a8a8;border-left-color:#888;border-right-color:#888"></div>
<div style="left:195px;top:397px;width:50px;height:17px;border:1px solid #a8a8a8;border-left-color:#888;border-right-color:#888"></div>
<div style="left:244px;top:397px;width:51px;height:17px;border:1px solid #a8a8a8;border-left-color:#888;border-right-color:#888"></div>
<div style="left:294px;top:397px;width:45px;height:17px;border:1px solid #a8a8a8;border-left-color:#888;border-right-color:#888"></div>
<div style="left:338px;top:397px;width:74px;height:17px;border:1px solid #a8a8a8;border-left-color:#888;border-right-color:#888"></div>
<div style="left:411px;top:397px;width:88px;height:17px;border:1px solid #a8a8a8;border-left-color:#888;border-right-color:#888"></div>
<div style="left:498px;top:397px;width:61px;height:17px;border:1px solid #a8a8a8;border-left-color:#888;border-right-color:#888"></div>
<div style="left:558px;top:397px;width:38px;height:17px;border:1px solid #a8a8a8;border-left-color:#888;border-right-color:#888"></div>
<div style="left:595px;top:397px;width:38px;height:17px;border:1px solid #a8a8a8;border-left-color:#888;border-right-color:#888"></div>
<div style="left:632px;top:397px;width:53px;height:17px;border:1px solid #a8a8a8;border-left-color:#888;border-right-color:#888"></div>
<div style="left:142px;top:397px;width:54px;height:16px;overflow:hidden">
<div class="t" style="left:0.5px;top:4px;font-weight:normal;font-size:10px;line-height:10px;color:#000;transform:scaleX(0.93);transform-origin:0 0;">PCHPIT</div>
</div>
<div style="left:196px;top:397px;width:49px;height:16px;overflow:hidden">
<div class="t" style="left:0.5px;top:4px;font-weight:normal;font-size:10px;line-height:10px;color:#000;transform:scaleX(0.93);transform-origin:0 0;">05/01/05</div>
</div>
<div style="left:245px;top:397px;width:50px;height:16px;overflow:hidden">
<div class="t" style="left:0.5px;top:4px;font-weight:normal;font-size:10px;line-height:10px;color:#000;transform:scaleX(0.93);transform-origin:0 0;">05/07/05</div>
</div>
<div style="left:295px;top:397px;width:44px;height:16px;overflow:hidden">
<div class="t" style="left:0.5px;top:4px;font-weight:normal;font-size:10px;line-height:10px;color:#000;transform:scaleX(0.93);transform-origin:0 0;">2003</div>
</div>
<div style="left:339px;top:397px;width:73px;height:16px;overflow:hidden">
<div class="t" style="left:0.5px;top:4px;font-weight:normal;font-size:10px;line-height:10px;color:#000;transform:scaleX(0.93);transform-origin:0 0;">SUI</div>
</div>
<div class="t" style="left:96.5px;width:400px;text-align:right;top:401px;font-weight:normal;font-size:10px;line-height:10px;color:#000;transform:scaleX(0.93);transform-origin:100% 0;">0</div>
<div style="left:499px;top:397px;width:60px;height:16px;overflow:hidden">
<div class="t" style="left:0.5px;top:4px;font-weight:normal;font-size:10px;line-height:10px;color:#000;transform:scaleX(0.93);transform-origin:0 0;">APPLE</div>
</div>
<div class="t" style="left:193.5px;width:400px;text-align:right;top:401px;font-weight:normal;font-size:10px;line-height:10px;color:#000;transform:scaleX(0.93);transform-origin:100% 0;">0</div>
<div class="t" style="left:230.5px;width:400px;text-align:right;top:401px;font-weight:normal;font-size:10px;line-height:10px;color:#000;transform:scaleX(0.93);transform-origin:100% 0;">0</div>
<div style="left:633px;top:397px;width:52px;height:16px;overflow:hidden">
<div class="t" style="left:0.5px;top:4px;font-weight:normal;font-size:10px;line-height:10px;color:#000;transform:scaleX(0.93);transform-origin:0 0;">Watkins, Da</div>
</div>
<div style="left:141px;top:413px;width:543px;height:17px;background:#fff"></div>
<div style="left:141px;top:413px;width:55px;height:17px;border:1px solid #a8a8a8;border-left-color:#888;border-right-color:#888"></div>
<div style="left:195px;top:413px;width:50px;height:17px;border:1px solid #a8a8a8;border-left-color:#888;border-right-color:#888"></div>
<div style="left:244px;top:413px;width:51px;height:17px;border:1px solid #a8a8a8;border-left-color:#888;border-right-color:#888"></div>
<div style="left:294px;top:413px;width:45px;height:17px;border:1px solid #a8a8a8;border-left-color:#888;border-right-color:#888"></div>
<div style="left:338px;top:413px;width:74px;height:17px;border:1px solid #a8a8a8;border-left-color:#888;border-right-color:#888"></div>
<div style="left:411px;top:413px;width:88px;height:17px;border:1px solid #a8a8a8;border-left-color:#888;border-right-color:#888"></div>
<div style="left:498px;top:413px;width:61px;height:17px;border:1px solid #a8a8a8;border-left-color:#888;border-right-color:#888"></div>
<div style="left:558px;top:413px;width:38px;height:17px;border:1px solid #a8a8a8;border-left-color:#888;border-right-color:#888"></div>
<div style="left:595px;top:413px;width:38px;height:17px;border:1px solid #a8a8a8;border-left-color:#888;border-right-color:#888"></div>
<div style="left:632px;top:413px;width:53px;height:17px;border:1px solid #a8a8a8;border-left-color:#888;border-right-color:#888"></div>
<div style="left:142px;top:413px;width:54px;height:16px;overflow:hidden">
<div class="t" style="left:0.5px;top:4px;font-weight:normal;font-size:10px;line-height:10px;color:#000;transform:scaleX(0.93);transform-origin:0 0;">PCHPIT</div>
</div>
<div style="left:196px;top:413px;width:49px;height:16px;overflow:hidden">
<div class="t" style="left:0.5px;top:4px;font-weight:normal;font-size:10px;line-height:10px;color:#000;transform:scaleX(0.93);transform-origin:0 0;">05/07/05</div>
</div>
<div style="left:245px;top:413px;width:50px;height:16px;overflow:hidden">
<div class="t" style="left:0.5px;top:4px;font-weight:normal;font-size:10px;line-height:10px;color:#000;transform:scaleX(0.93);transform-origin:0 0;">05/08/05</div>
</div>
<div style="left:295px;top:413px;width:44px;height:16px;overflow:hidden">
<div class="t" style="left:0.5px;top:4px;font-weight:normal;font-size:10px;line-height:10px;color:#000;transform:scaleX(0.93);transform-origin:0 0;">1001</div>
</div>
<div style="left:339px;top:413px;width:73px;height:16px;overflow:hidden">
<div class="t" style="left:0.5px;top:4px;font-weight:normal;font-size:10px;line-height:10px;color:#000;transform:scaleX(0.93);transform-origin:0 0;">POKB</div>
</div>
<div class="t" style="left:96.5px;width:400px;text-align:right;top:417px;font-weight:normal;font-size:10px;line-height:10px;color:#000;transform:scaleX(0.93);transform-origin:100% 0;">50</div>
<div style="left:499px;top:413px;width:60px;height:16px;overflow:hidden">
<div class="t" style="left:0.5px;top:4px;font-weight:normal;font-size:10px;line-height:10px;color:#000;transform:scaleX(0.93);transform-origin:0 0;">SPECIAL</div>
</div>
<div class="t" style="left:193.5px;width:400px;text-align:right;top:417px;font-weight:normal;font-size:10px;line-height:10px;color:#000;transform:scaleX(0.93);transform-origin:100% 0;">1</div>
<div class="t" style="left:230.5px;width:400px;text-align:right;top:417px;font-weight:normal;font-size:10px;line-height:10px;color:#000;transform:scaleX(0.93);transform-origin:100% 0;">0</div>
<div style="left:633px;top:413px;width:52px;height:16px;overflow:hidden">
<div class="t" style="left:0.5px;top:4px;font-weight:normal;font-size:10px;line-height:10px;color:#000;transform:scaleX(0.93);transform-origin:0 0;">Watkins, Da</div>
</div>
<div style="left:141px;top:429px;width:543px;height:16px;background:#fff"></div>
<div style="left:141px;top:429px;width:55px;height:16px;border:1px solid #a8a8a8;border-left-color:#888;border-right-color:#888"></div>
<div style="left:195px;top:429px;width:50px;height:16px;border:1px solid #a8a8a8;border-left-color:#888;border-right-color:#888"></div>
<div style="left:244px;top:429px;width:51px;height:16px;border:1px solid #a8a8a8;border-left-color:#888;border-right-color:#888"></div>
<div style="left:294px;top:429px;width:45px;height:16px;border:1px solid #a8a8a8;border-left-color:#888;border-right-color:#888"></div>
<div style="left:338px;top:429px;width:74px;height:16px;border:1px solid #a8a8a8;border-left-color:#888;border-right-color:#888"></div>
<div style="left:411px;top:429px;width:88px;height:16px;border:1px solid #a8a8a8;border-left-color:#888;border-right-color:#888"></div>
<div style="left:498px;top:429px;width:61px;height:16px;border:1px solid #a8a8a8;border-left-color:#888;border-right-color:#888"></div>
<div style="left:558px;top:429px;width:38px;height:16px;border:1px solid #a8a8a8;border-left-color:#888;border-right-color:#888"></div>
<div style="left:595px;top:429px;width:38px;height:16px;border:1px solid #a8a8a8;border-left-color:#888;border-right-color:#888"></div>
<div style="left:632px;top:429px;width:53px;height:16px;border:1px solid #a8a8a8;border-left-color:#888;border-right-color:#888"></div>
<div style="left:142px;top:429px;width:54px;height:15px;overflow:hidden">
<div class="t" style="left:0.5px;top:4px;font-weight:normal;font-size:10px;line-height:10px;color:#000;transform:scaleX(0.93);transform-origin:0 0;">PCHPIT</div>
</div>
<div style="left:196px;top:429px;width:49px;height:15px;overflow:hidden">
<div class="t" style="left:0.5px;top:4px;font-weight:normal;font-size:10px;line-height:10px;color:#000;transform:scaleX(0.93);transform-origin:0 0;">05/09/05</div>
</div>
<div style="left:245px;top:429px;width:50px;height:15px;overflow:hidden">
<div class="t" style="left:0.5px;top:4px;font-weight:normal;font-size:10px;line-height:10px;color:#000;transform:scaleX(0.93);transform-origin:0 0;">05/10/05</div>
</div>
<div style="left:295px;top:429px;width:44px;height:15px;overflow:hidden">
<div class="t" style="left:0.5px;top:4px;font-weight:normal;font-size:10px;line-height:10px;color:#000;transform:scaleX(0.93);transform-origin:0 0;">1001</div>
</div>
<div style="left:339px;top:429px;width:73px;height:15px;overflow:hidden">
<div class="t" style="left:0.5px;top:4px;font-weight:normal;font-size:10px;line-height:10px;color:#000;transform:scaleX(0.93);transform-origin:0 0;">POKB</div>
</div>
<div class="t" style="left:96.5px;width:400px;text-align:right;top:433px;font-weight:normal;font-size:10px;line-height:10px;color:#000;transform:scaleX(0.93);transform-origin:100% 0;">50</div>
<div style="left:499px;top:429px;width:60px;height:15px;overflow:hidden">
<div class="t" style="left:0.5px;top:4px;font-weight:normal;font-size:10px;line-height:10px;color:#000;transform:scaleX(0.93);transform-origin:0 0;">SPECIAL</div>
</div>
<div class="t" style="left:193.5px;width:400px;text-align:right;top:433px;font-weight:normal;font-size:10px;line-height:10px;color:#000;transform:scaleX(0.93);transform-origin:100% 0;">1</div>
<div class="t" style="left:230.5px;width:400px;text-align:right;top:433px;font-weight:normal;font-size:10px;line-height:10px;color:#000;transform:scaleX(0.93);transform-origin:100% 0;">0</div>
<div style="left:633px;top:429px;width:52px;height:15px;overflow:hidden">
<div class="t" style="left:0.5px;top:4px;font-weight:normal;font-size:10px;line-height:10px;color:#000;transform:scaleX(0.93);transform-origin:0 0;">Watkins, Da</div>
</div>
<div style="left:141px;top:444px;width:543px;height:17px;background:#00ffff"></div>
<div style="left:141px;top:444px;width:55px;height:17px;border:1px solid #a8a8a8;border-left-color:#888;border-right-color:#888"></div>
<div style="left:195px;top:444px;width:50px;height:17px;border:1px solid #a8a8a8;border-left-color:#888;border-right-color:#888"></div>
<div style="left:244px;top:444px;width:51px;height:17px;border:1px solid #a8a8a8;border-left-color:#888;border-right-color:#888"></div>
<div style="left:294px;top:444px;width:45px;height:17px;border:1px solid #a8a8a8;border-left-color:#888;border-right-color:#888"></div>
<div style="left:338px;top:444px;width:74px;height:17px;border:1px solid #a8a8a8;border-left-color:#888;border-right-color:#888"></div>
<div style="left:411px;top:444px;width:88px;height:17px;border:1px solid #a8a8a8;border-left-color:#888;border-right-color:#888"></div>
<div style="left:498px;top:444px;width:61px;height:17px;border:1px solid #a8a8a8;border-left-color:#888;border-right-color:#888"></div>
<div style="left:558px;top:444px;width:38px;height:17px;border:1px solid #a8a8a8;border-left-color:#888;border-right-color:#888"></div>
<div style="left:595px;top:444px;width:38px;height:17px;border:1px solid #a8a8a8;border-left-color:#888;border-right-color:#888"></div>
<div style="left:632px;top:444px;width:53px;height:17px;border:1px solid #a8a8a8;border-left-color:#888;border-right-color:#888"></div>
<div style="left:142px;top:444px;width:54px;height:16px;overflow:hidden">
<div class="t" style="left:0.5px;top:4px;font-weight:normal;font-size:10px;line-height:10px;color:#003c3c;transform:scaleX(0.93);transform-origin:0 0;">PCHPIT</div>
</div>
<div style="left:196px;top:444px;width:49px;height:16px;overflow:hidden">
<div class="t" style="left:0.5px;top:4px;font-weight:normal;font-size:10px;line-height:10px;color:#003c3c;transform:scaleX(0.93);transform-origin:0 0;">05/11/05</div>
</div>
<div style="left:245px;top:444px;width:50px;height:16px;overflow:hidden">
<div class="t" style="left:0.5px;top:4px;font-weight:normal;font-size:10px;line-height:10px;color:#003c3c;transform:scaleX(0.93);transform-origin:0 0;">05/11/05</div>
</div>
<div style="left:295px;top:444px;width:44px;height:16px;overflow:hidden">
<div class="t" style="left:0.5px;top:4px;font-weight:normal;font-size:10px;line-height:10px;color:#003c3c;transform:scaleX(0.93);transform-origin:0 0;">2000</div>
</div>
<div style="left:339px;top:444px;width:73px;height:16px;overflow:hidden">
<div class="t" style="left:0.5px;top:4px;font-weight:normal;font-size:10px;line-height:10px;color:#003c3c;transform:scaleX(0.93);transform-origin:0 0;">SUI</div>
</div>
<div class="t" style="left:96.5px;width:400px;text-align:right;top:448px;font-weight:normal;font-size:10px;line-height:10px;color:#003c3c;transform:scaleX(0.93);transform-origin:100% 0;">52</div>
<div style="left:499px;top:444px;width:60px;height:16px;overflow:hidden">
<div class="t" style="left:0.5px;top:4px;font-weight:normal;font-size:10px;line-height:10px;color:#003c3c;transform:scaleX(0.93);transform-origin:0 0;">SPECIAL</div>
</div>
<div style="left:633px;top:444px;width:52px;height:16px;overflow:hidden">
<div class="t" style="left:0.5px;top:4px;font-weight:normal;font-size:10px;line-height:10px;color:#003c3c;transform:scaleX(0.93);transform-origin:0 0;">Watkins, Da</div>
</div>
<div style="left:141px;top:460px;width:543px;height:17px;background:#fff"></div>
<div style="left:141px;top:460px;width:55px;height:17px;border:1px solid #a8a8a8;border-left-color:#888;border-right-color:#888"></div>
<div style="left:195px;top:460px;width:50px;height:17px;border:1px solid #a8a8a8;border-left-color:#888;border-right-color:#888"></div>
<div style="left:244px;top:460px;width:51px;height:17px;border:1px solid #a8a8a8;border-left-color:#888;border-right-color:#888"></div>
<div style="left:294px;top:460px;width:45px;height:17px;border:1px solid #a8a8a8;border-left-color:#888;border-right-color:#888"></div>
<div style="left:338px;top:460px;width:74px;height:17px;border:1px solid #a8a8a8;border-left-color:#888;border-right-color:#888"></div>
<div style="left:411px;top:460px;width:88px;height:17px;border:1px solid #a8a8a8;border-left-color:#888;border-right-color:#888"></div>
<div style="left:498px;top:460px;width:61px;height:17px;border:1px solid #a8a8a8;border-left-color:#888;border-right-color:#888"></div>
<div style="left:558px;top:460px;width:38px;height:17px;border:1px solid #a8a8a8;border-left-color:#888;border-right-color:#888"></div>
<div style="left:595px;top:460px;width:38px;height:17px;border:1px solid #a8a8a8;border-left-color:#888;border-right-color:#888"></div>
<div style="left:632px;top:460px;width:53px;height:17px;border:1px solid #a8a8a8;border-left-color:#888;border-right-color:#888"></div>
<div style="left:142px;top:460px;width:54px;height:16px;overflow:hidden">
<div class="t" style="left:0.5px;top:4px;font-weight:normal;font-size:10px;line-height:10px;color:#000;transform:scaleX(0.93);transform-origin:0 0;">PCHPIT</div>
</div>
<div style="left:196px;top:460px;width:49px;height:16px;overflow:hidden">
<div class="t" style="left:0.5px;top:4px;font-weight:normal;font-size:10px;line-height:10px;color:#000;transform:scaleX(0.93);transform-origin:0 0;">05/11/05</div>
</div>
<div style="left:245px;top:460px;width:50px;height:16px;overflow:hidden">
<div class="t" style="left:0.5px;top:4px;font-weight:normal;font-size:10px;line-height:10px;color:#000;transform:scaleX(0.93);transform-origin:0 0;">05/12/05</div>
</div>
<div style="left:295px;top:460px;width:44px;height:16px;overflow:hidden">
<div class="t" style="left:0.5px;top:4px;font-weight:normal;font-size:10px;line-height:10px;color:#000;transform:scaleX(0.93);transform-origin:0 0;">1001</div>
</div>
<div style="left:339px;top:460px;width:73px;height:16px;overflow:hidden">
<div class="t" style="left:0.5px;top:4px;font-weight:normal;font-size:10px;line-height:10px;color:#000;transform:scaleX(0.93);transform-origin:0 0;">POKB</div>
</div>
<div class="t" style="left:96.5px;width:400px;text-align:right;top:464px;font-weight:normal;font-size:10px;line-height:10px;color:#000;transform:scaleX(0.93);transform-origin:100% 0;">250</div>
<div style="left:499px;top:460px;width:60px;height:16px;overflow:hidden">
<div class="t" style="left:0.5px;top:4px;font-weight:normal;font-size:10px;line-height:10px;color:#000;transform:scaleX(0.93);transform-origin:0 0;">TREE</div>
</div>
<div class="t" style="left:193.5px;width:400px;text-align:right;top:464px;font-weight:normal;font-size:10px;line-height:10px;color:#000;transform:scaleX(0.93);transform-origin:100% 0;">1</div>
<div class="t" style="left:230.5px;width:400px;text-align:right;top:464px;font-weight:normal;font-size:10px;line-height:10px;color:#000;transform:scaleX(0.93);transform-origin:100% 0;">0</div>
<div style="left:633px;top:460px;width:52px;height:16px;overflow:hidden">
<div class="t" style="left:0.5px;top:4px;font-weight:normal;font-size:10px;line-height:10px;color:#000;transform:scaleX(0.93);transform-origin:0 0;">Watkins, Da</div>
</div>
<div style="left:141px;top:476px;width:543px;height:17px;background:#c0c0ff"></div>
<div style="left:141px;top:476px;width:55px;height:17px;border:1px solid #a8a8a8;border-left-color:#888;border-right-color:#888"></div>
<div style="left:195px;top:476px;width:50px;height:17px;border:1px solid #a8a8a8;border-left-color:#888;border-right-color:#888"></div>
<div style="left:244px;top:476px;width:51px;height:17px;border:1px solid #a8a8a8;border-left-color:#888;border-right-color:#888"></div>
<div style="left:294px;top:476px;width:45px;height:17px;border:1px solid #a8a8a8;border-left-color:#888;border-right-color:#888"></div>
<div style="left:338px;top:476px;width:74px;height:17px;border:1px solid #a8a8a8;border-left-color:#888;border-right-color:#888"></div>
<div style="left:411px;top:476px;width:88px;height:17px;border:1px solid #a8a8a8;border-left-color:#888;border-right-color:#888"></div>
<div style="left:498px;top:476px;width:61px;height:17px;border:1px solid #a8a8a8;border-left-color:#888;border-right-color:#888"></div>
<div style="left:558px;top:476px;width:38px;height:17px;border:1px solid #a8a8a8;border-left-color:#888;border-right-color:#888"></div>
<div style="left:595px;top:476px;width:38px;height:17px;border:1px solid #a8a8a8;border-left-color:#888;border-right-color:#888"></div>
<div style="left:632px;top:476px;width:53px;height:17px;border:1px solid #a8a8a8;border-left-color:#888;border-right-color:#888"></div>
<div style="left:142px;top:476px;width:54px;height:16px;overflow:hidden">
<div class="t" style="left:0.5px;top:4px;font-weight:normal;font-size:10px;line-height:10px;color:#202040;transform:scaleX(0.93);transform-origin:0 0;">PCHPIT</div>
</div>
<div style="left:196px;top:476px;width:49px;height:16px;overflow:hidden">
<div class="t" style="left:0.5px;top:4px;font-weight:normal;font-size:10px;line-height:10px;color:#202040;transform:scaleX(0.93);transform-origin:0 0;">05/12/05</div>
</div>
<div style="left:245px;top:476px;width:50px;height:16px;overflow:hidden">
<div class="t" style="left:0.5px;top:4px;font-weight:normal;font-size:10px;line-height:10px;color:#202040;transform:scaleX(0.93);transform-origin:0 0;">05/12/05</div>
</div>
<div style="left:295px;top:476px;width:44px;height:16px;overflow:hidden">
<div class="t" style="left:0.5px;top:4px;font-weight:normal;font-size:10px;line-height:10px;color:#202040;transform:scaleX(0.93);transform-origin:0 0;">38</div>
</div>
<div style="left:339px;top:476px;width:73px;height:16px;overflow:hidden">
<div class="t" style="left:0.5px;top:4px;font-weight:normal;font-size:10px;line-height:10px;color:#202040;transform:scaleX(0.93);transform-origin:0 0;">PASSER BY</div>
</div>
<div style="left:633px;top:476px;width:52px;height:16px;overflow:hidden">
<div class="t" style="left:0.5px;top:4px;font-weight:normal;font-size:10px;line-height:10px;color:#202040;transform:scaleX(0.93);transform-origin:0 0;">Watkins, Da</div>
</div>
<div style="left:141px;top:492px;width:543px;height:13px;background-color:#fff;background-image:linear-gradient(45deg,#d4d0c8 25%,transparent 25%,transparent 75%,#d4d0c8 75%),linear-gradient(45deg,#d4d0c8 25%,transparent 25%,transparent 75%,#d4d0c8 75%);background-size:2px 2px;background-position:0 0,1px 1px"></div>
<div class="btn" style="left:141px;top:492px;width:12px;height:13px"></div>
<div style="left:145px;top:495px;width:0px;height:0px;border-top:3px solid transparent;border-bottom:3px solid transparent;border-right:4px solid #000"></div>
<div class="btn" style="left:153px;top:492px;width:167px;height:13px"></div>
<div class="btn" style="left:672px;top:492px;width:12px;height:13px"></div>
<div style="left:677px;top:495px;width:0px;height:0px;border-top:3px solid transparent;border-bottom:3px solid transparent;border-left:4px solid #000"></div>
<div style="left:684px;top:367px;width:12px;height:125px;background-color:#fff;background-image:linear-gradient(45deg,#d4d0c8 25%,transparent 25%,transparent 75%,#d4d0c8 75%),linear-gradient(45deg,#d4d0c8 25%,transparent 25%,transparent 75%,#d4d0c8 75%);background-size:2px 2px;background-position:0 0,1px 1px"></div>
<div class="btn" style="left:684px;top:367px;width:12px;height:12px"></div>
<div style="left:686.5px;top:371px;width:0px;height:0px;border-left:3px solid transparent;border-right:3px solid transparent;border-bottom:4px solid #000"></div>
<div class="btn" style="left:684px;top:379px;width:12px;height:56px"></div>
<div class="btn" style="left:684px;top:492px;width:12px;height:13px"></div>
<div style="left:686.5px;top:497px;width:0px;height:0px;border-left:3px solid transparent;border-right:3px solid transparent;border-top:4px solid #000"></div>
<div style="left:137px;top:524px;width:621px;height:28px;border:1px solid #fff"></div>
<div style="left:136px;top:523px;width:621px;height:28px;border:1px solid #808080"></div>
<div style="left:143px;top:533px;width:68px;height:11px;background:#f00000;border:1px solid #a00000;border-right-color:#600000;border-bottom-color:#600000"></div>
<div class="t" style="left:-23px;width:400px;text-align:center;top:534px;font-weight:bold;font-size:10px;line-height:10px;color:#fff;transform:scaleX(0.98);transform-origin:50% 0;">Member</div>
<div style="left:213px;top:533px;width:68px;height:11px;background:#f00000;border:1px solid #a00000;border-right-color:#600000;border-bottom-color:#600000"></div>
<div class="t" style="left:47px;width:400px;text-align:center;top:534px;font-weight:bold;font-size:10px;line-height:10px;color:#fff;transform:scaleX(0.98);transform-origin:50% 0;">Stay State</div>
<div class="btn" style="left:699px;top:528px;width:56px;height:19px;"></div>
<div class="t" style="left:527.0px;width:400px;text-align:center;top:534px;font-weight:normal;font-size:10px;line-height:10px;color:#000;transform:scaleX(0.93);transform-origin:50% 0;"><u>C</u>lose</div>
</body></html>
